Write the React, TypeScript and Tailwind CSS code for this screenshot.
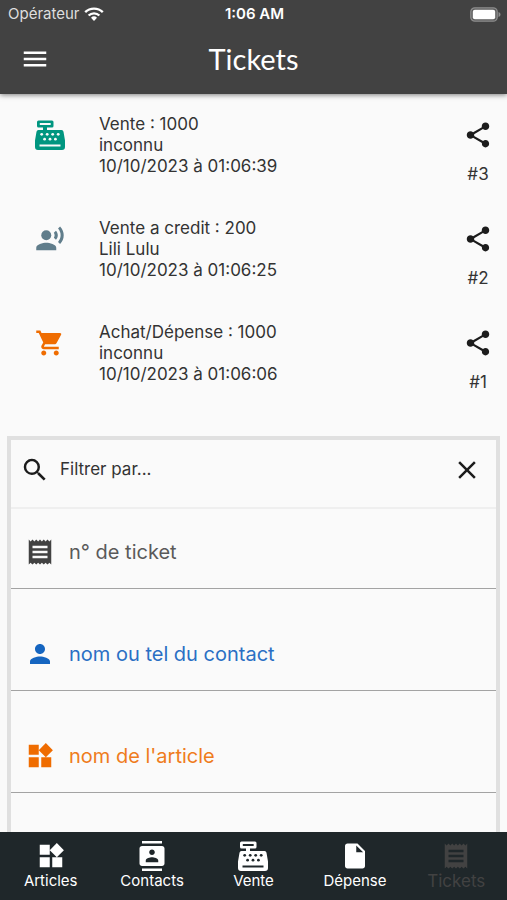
import type { ComponentType } from "react";
import {
  MdClose,
  MdContacts,
  MdInsertDriveFile,
  MdMenu,
  MdPerson,
  MdReceipt,
  MdRecordVoiceOver,
  MdSearch,
  MdShare,
  MdShoppingCart,
  MdWidgets,
} from "react-icons/md";

type IconType = ComponentType<{ className?: string }>;

function CashRegisterIcon({ className }: { className?: string }) {
  return (
    <svg viewBox="0 0 30 30" className={className} aria-hidden="true">
      <path
        fill="currentColor"
        fillRule="evenodd"
        d="M3.5 0.5H17a1.5 1.5 0 0 1 1.5 1.5V6a1.5 1.5 0 0 1-1.5 1.5H12V10H26.5a2 2 0 0 1 2 1.7L30 20.5V27a3 3 0 0 1-3 3H3a3 3 0 0 1-3-3V20.5L1.5 11.7a2 2 0 0 1 2-1.7H8V7.5H3.5A1.5 1.5 0 0 1 2 6V2A1.5 1.5 0 0 1 3.5 0.5ZM4.8 3.1V5.1H15.7V3.1ZM4.5 24.5V26.5H25.5V24.5Z"
      />
      <g className="fill-[#fafafa] group-data-[dark]:fill-[#1f272a]">
        <circle cx="6.7" cy="14.3" r="1.4" />
        <circle cx="12.2" cy="14.3" r="1.4" />
        <circle cx="17.7" cy="14.3" r="1.4" />
        <circle cx="23.2" cy="14.3" r="1.4" />
        <circle cx="9.6" cy="19.2" r="1.4" />
        <circle cx="15" cy="19.2" r="1.4" />
        <circle cx="20.4" cy="19.2" r="1.4" />
      </g>
    </svg>
  );
}

function WifiIcon() {
  return (
    <svg viewBox="0 0 20 14" className="h-[14px] w-5" fill="none" stroke="white" aria-hidden="true">
      <path d="M1.2 5.2a12.5 12.5 0 0 1 17.6 0" strokeWidth="2.4" />
      <path d="M4.6 8.5a7.7 7.7 0 0 1 10.8 0" strokeWidth="2.3" />
      <path d="M10 14l-3-3.2a4.3 4.3 0 0 1 6 0z" fill="white" stroke="none" />
    </svg>
  );
}

function BatteryIcon() {
  return (
    <svg viewBox="0 0 31 15" className="h-[15px] w-[31px]" aria-hidden="true">
      <rect x="0.8" y="0.8" width="26.4" height="13.4" rx="4" fill="#5c5c5c" stroke="#8c8c8c" strokeWidth="1.3" />
      <rect x="2.8" y="2.8" width="22.4" height="9.4" rx="2" fill="white" />
      <path d="M28.5 5v5c1.3-.5 2-1.4 2-2.5s-.7-2-2-2.5z" fill="#8c8c8c" />
    </svg>
  );
}

type Ticket = {
  id: number;
  title: string;
  contact: string;
  date: string;
  icon: IconType;
  color: string;
};

const tickets: Ticket[] = [
  {
    id: 3,
    title: "Vente : 1000",
    contact: "inconnu",
    date: "10/10/2023 à 01:06:39",
    icon: CashRegisterIcon,
    color: "text-[#009680]",
  },
  {
    id: 2,
    title: "Vente a credit : 200",
    contact: "Lili Lulu",
    date: "10/10/2023 à 01:06:25",
    icon: MdRecordVoiceOver,
    color: "text-[#607d8b]",
  },
  {
    id: 1,
    title: "Achat/Dépense : 1000",
    contact: "inconnu",
    date: "10/10/2023 à 01:06:06",
    icon: MdShoppingCart,
    color: "text-[#ef6c00]",
  },
];

const filters: { name: string; label: string; icon: IconType; color: string }[] = [
  { name: "ticket", label: "n° de ticket", icon: MdReceipt, color: "text-[#424242] placeholder:text-[#5a5a5a]" },
  { name: "contact", label: "nom ou tel du contact", icon: MdPerson, color: "text-[#1565c0] placeholder:text-[#2a6fc4]" },
  { name: "article", label: "nom de l'article", icon: MdWidgets, color: "text-[#ef6c00] placeholder:text-[#ef7c1c]" },
];

const tabs: { label: string; icon: IconType }[] = [
  { label: "Articles", icon: MdWidgets },
  { label: "Contacts", icon: MdContacts },
  { label: "Vente", icon: CashRegisterIcon },
  { label: "Dépense", icon: MdInsertDriveFile },
  { label: "Tickets", icon: MdReceipt },
];

export default function App() {
  return (
    <div className="flex h-screen flex-col bg-[#fafafa] font-['Inter',sans-serif] text-[#333333]">
      <header className="z-10 shrink-0 bg-[#424242] text-white shadow-[0_1px_5px_rgba(0,0,0,0.5)]">
        <div className="grid h-7 grid-cols-3 items-center pl-2 pr-1.5 text-[15px]">
          <div className="flex items-center gap-1 text-[#dedede]">
            <span>Opérateur</span>
            <WifiIcon />
          </div>
          <span className="text-center font-semibold">1:06 AM</span>
          <div className="flex justify-end">
            <BatteryIcon />
          </div>
        </div>
        <div className="grid h-[66px] grid-cols-[70px_1fr_70px] items-center pb-1">
          <button type="button" aria-label="Menu" className="flex justify-center">
            <MdMenu className="size-[30px]" />
          </button>
          <h1 className="text-center font-['Lato',sans-serif] text-[29px] leading-8">Tickets</h1>
        </div>
      </header>

      <main className="flex min-h-0 flex-1 flex-col overflow-y-auto [scrollbar-width:none]">
        <ul>
          {tickets.map((t) => (
            <li key={t.id} className="flex pt-5 pr-3.5 pb-3 text-[17px] leading-[21px]">
              <div className="flex w-[99px] shrink-0 justify-center pt-1.5">
                <t.icon className={"size-[30px] " + t.color} />
              </div>
              <div className="min-w-0 flex-1">
                <p>{t.title}</p>
                <p>{t.contact}</p>
                <p>{t.date}</p>
              </div>
              <div className="flex flex-col items-center gap-3 pt-1.5">
                <button type="button" aria-label="Partager" className="text-[#1c1c1c]">
                  <MdShare className="size-[30px]" />
                </button>
                <span className="text-[17px] leading-6">#{t.id}</span>
              </div>
            </li>
          ))}
        </ul>

        <section className="mx-[7px] mt-[30px] flex-1 border-4 border-b-0 border-[#e0e0e0]">
          <div className="flex h-[69px] items-center border-b-2 border-[#efefef] px-2 pb-2">
            <MdSearch className="ml-px size-[30px] text-[#1c1c1c]" />
            <h2 className="ml-2.5 flex-1 text-[17px]">Filtrer par...</h2>
            <button type="button" aria-label="Fermer" className="mr-1.5 text-[#1c1c1c]">
              <MdClose className="size-[30px]" />
            </button>
          </div>
          <form className="flex flex-col gap-[30px] pt-2">
            {filters.map((f) => (
              <label key={f.name} className={"flex h-[72px] items-center border-b border-[#a3a3a3] pb-px pl-3.5 " + f.color}>
                <f.icon className="size-[30px] shrink-0" />
                <input
                  type="text"
                  name={f.name}
                  aria-label={f.label}
                  placeholder={f.label}
                  className={"ml-3.5 h-full min-w-0 flex-1 text-[20px] outline-none " + f.color}
                />
              </label>
            ))}
          </form>
        </section>
      </main>

      <nav className="group grid h-[68px] shrink-0 grid-cols-5 bg-[#1f272a]" data-dark>
        {tabs.map((tab) => (
          <a
            key={tab.label}
            href="#"
            className={
              "flex flex-col items-center pt-[9px] " +
              (tab.label === "Tickets" ? "text-[17px] text-[#424242]" : "text-[15px] text-white")
            }
          >
            <tab.icon className="size-[30px]" />
            <span className="leading-5">{tab.label}</span>
          </a>
        ))}
      </nav>
    </div>
  );
}
